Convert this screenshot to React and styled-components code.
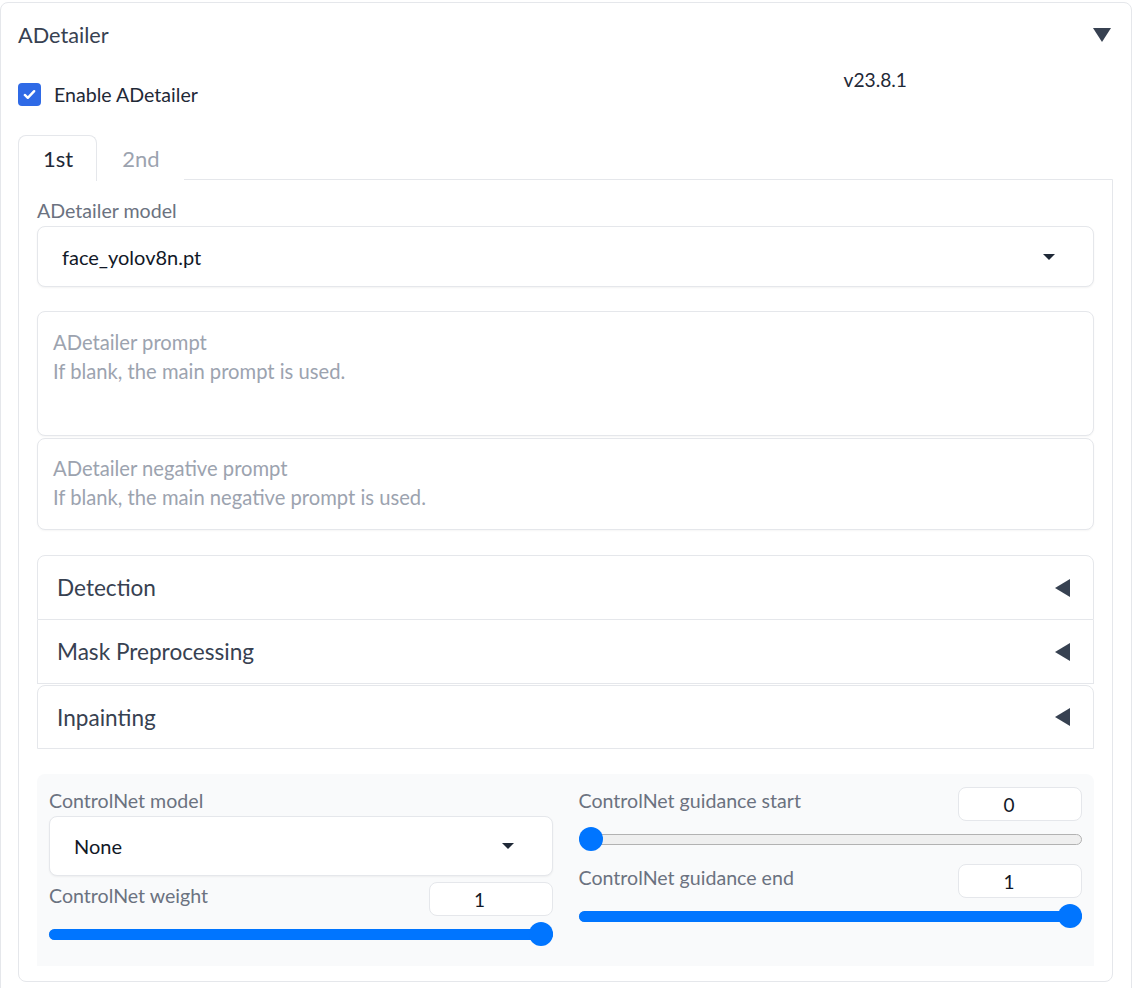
import React from 'react';
import styled, { createGlobalStyle } from 'styled-components';

const GlobalStyle = createGlobalStyle`
  html, body {
    margin: 0;
    padding: 0;
    background: #ffffff;
    font-family: Lato, "Noto Sans", "Liberation Sans", sans-serif;
    color: #1f2937;
  }
  * { box-sizing: border-box; }
`;

const Panel = styled.div`
  width: 1132px;
  margin-top: 2px;
  border: 1px solid #e5e7eb;
  border-radius: 8px;
  padding: 0 18px 40px 17px;
  background: #fff;
`;

const Header = styled.div`
  height: 64px;
  display: flex;
  align-items: center;
  justify-content: space-between;
`;

const Title = styled.span`
  font-size: 21.7px;
  color: #374151;
`;

const Triangle = styled.span`
  width: 0;
  height: 0;
  border-style: solid;
  border-color: transparent;
  ${p => p.$dir === 'down' && `
    border-width: 14px 9.5px 0 9.5px;
    border-top-color: #374151;
    margin-right: 2px;
  `}
  ${p => p.$dir === 'left' && `
    border-width: 9.5px 15px 9.5px 0;
    border-right-color: #374151;
  `}
  ${p => p.$dir === 'caret' && `
    border-width: 6px 6px 0 6px;
    border-top-color: #1f2937;
  `}
`;

const EnableRow = styled.div`
  height: 68px;
  display: grid;
  grid-template-columns: 1fr 1fr;
`;

const CheckLabel = styled.label`
  display: flex;
  align-items: center;
  gap: 13px;
  padding-top: 16px;
  align-self: start;
  font-size: 19.6px;
  color: #1f2937;
`;

const Check = styled.span`
  width: 23px;
  height: 23px;
  border-radius: 4px;
  background: #2f6ae6;
  display: flex;
  align-items: center;
  justify-content: center;
`;

const Version = styled.div`
  padding-top: 1px;
  padding-left: 278px;
  font-size: 19.2px;
  color: #1f2937;
`;

const TabBar = styled.div`
  display: flex;
  height: 45px;
`;

const Tab = styled.div`
  padding: 0 23px 0 24px;
  display: flex;
  align-items: center;
  font-size: 22px;
  color: ${p => (p.$active ? '#1f2937' : '#9ca3af')};
  background: #fff;
  border: 1px solid ${p => (p.$active ? '#e5e7eb' : 'transparent')};
  border-bottom: none;
  border-radius: 8px 8px 0 0;
  position: relative;
  z-index: 1;
  height: ${p => (p.$active ? '46px' : '45px')};
`;

const TabPanel = styled.div`
  margin-top: -1px;
  border: 1px solid #e5e7eb;
  border-radius: 0 0 8px 8px;
  padding: 20px 18px 15px 18px;
  display: flex;
  flex-direction: column;
`;

const FieldLabel = styled.div`
  font-size: 19.6px;
  line-height: 22px;
  color: #6b7280;
  margin-bottom: 4px;
  margin-top: ${p => p.$mt || 0}px;
`;

const Select = styled.div`
  height: ${p => p.$h || 61}px;
  border: 1px solid #e5e7eb;
  border-radius: 8px;
  background: #fff;
  box-shadow: 0 1px 2px rgba(0, 0, 0, 0.05);
  display: flex;
  align-items: center;
  justify-content: space-between;
  padding: 0 38px 0 24px;
  font-size: 20px;
  color: #111827;
`;

const TextArea = styled.div`
  height: ${p => p.$h}px;
  margin-top: ${p => p.$mt}px;
  border: 1px solid #e5e7eb;
  border-radius: 8px;
  background: #fff;
  box-shadow: 0 1px 2px rgba(0, 0, 0, 0.04);
  padding: ${p => p.$pt}px 15px 0 15px;
  font-size: 20.2px;
  line-height: 29px;
  color: #9ca3af;
`;

const AccordionGroup = styled.div`
  margin-top: 25px;
  display: flex;
  flex-direction: column;
`;

const Accordion = styled.div`
  height: ${p => p.$h}px;
  margin-top: ${p => p.$mt || 0}px;
  border: 1px solid #e5e7eb;
  border-top: ${p => (p.$noTop ? 'none' : '1px solid #e5e7eb')};
  border-radius: ${p => (p.$round ? '8px 8px 0 0' : '0')};
  background: #fff;
  display: flex;
  align-items: center;
  justify-content: space-between;
  padding: 0 23px 0 19px;
  font-size: 22.6px;
  color: #374151;
`;

const GreyBox = styled.div`
  margin-top: 25px;
  background: #f9fafb;
  border-radius: 8px 8px 0 0;
  padding: 13px 12px 14px 12px;
  display: grid;
  grid-template-columns: 1fr 1fr;
  column-gap: 26px;
`;

const Column = styled.div`
  display: flex;
  flex-direction: column;
`;

const SliderBlock = styled.div`
  display: flex;
  flex-direction: column;
  margin-top: ${p => p.$mt || 0}px;
`;

const SliderHead = styled.div`
  height: 34px;
  display: flex;
  justify-content: space-between;
  align-items: flex-start;
`;

const SliderLabel = styled.div`
  font-size: 19.6px;
  line-height: 22px;
  padding-top: 3px;
  color: #6b7280;
`;

const NumberBox = styled.div`
  width: 124px;
  height: 34px;
  border: 1px solid #e5e7eb;
  border-radius: 8px;
  background: #fff;
  display: flex;
  align-items: center;
  justify-content: center;
  padding-right: 22px;
  font-size: 19px;
  color: #111827;
`;

const SliderZone = styled.div`
  height: 36px;
  display: flex;
  align-items: center;
`;

const Track = styled.div`
  position: relative;
  width: 100%;
  height: 11px;
  border-radius: 6px;
  background: #efefef;
  border: 1px solid #b2b2b2;
`;

const Fill = styled.div`
  position: absolute;
  left: -1px;
  top: -1px;
  bottom: -1px;
  border-radius: 6px;
  background: #0075ff;
`;

const Thumb = styled.div`
  position: absolute;
  top: 50%;
  width: 24px;
  height: 24px;
  margin-top: -12px;
  margin-left: -12px;
  border-radius: 50%;
  background: #0075ff;
`;

function Slider({ label, value, min = 0, max = 1 }) {
  const pct = ((value - min) / (max - min)) * 100;
  return (
    <>
      <SliderHead>
        <SliderLabel>{label}</SliderLabel>
        <NumberBox>{value}</NumberBox>
      </SliderHead>
      <SliderZone>
        <Track>
          {pct > 0 && <Fill style={{ width: `calc(${pct}% + 2px)` }} />}
          <Thumb style={{ left: `calc(${pct}% + ${11 - pct * 0.22}px)` }} />
        </Track>
      </SliderZone>
    </>
  );
}

export default function App() {
  return (
    <>
      <GlobalStyle />
      <Panel>
        <Header>
          <Title>ADetailer</Title>
          <Triangle $dir="down" />
        </Header>
        <EnableRow>
          <CheckLabel>
            <Check>
              <svg width="15" height="15" viewBox="0 0 16 16">
                <path d="M3 8.5l3.2 3L13 4.5" fill="none" stroke="#fff" strokeWidth="2.6" strokeLinecap="round" strokeLinejoin="round" />
              </svg>
            </Check>
            Enable ADetailer
          </CheckLabel>
          <Version>v23.8.1</Version>
        </EnableRow>
        <TabBar>
          <Tab $active>1st</Tab>
          <Tab>2nd</Tab>
        </TabBar>
        <TabPanel>
          <FieldLabel>ADetailer model</FieldLabel>
          <Select>
            face_yolov8n.pt
            <Triangle $dir="caret" />
          </Select>
          <TextArea $h={125} $mt={24} $pt={16}>
            ADetailer prompt
            <br />
            If blank, the main prompt is used.
          </TextArea>
          <TextArea $h={92} $mt={2} $pt={15}>
            ADetailer negative prompt
            <br />
            If blank, the main negative prompt is used.
          </TextArea>
          <AccordionGroup>
            <Accordion $h={65} $round>
              Detection
              <Triangle $dir="left" />
            </Accordion>
            <Accordion $h={64} $noTop>
              Mask Preprocessing
              <Triangle $dir="left" />
            </Accordion>
            <Accordion $h={64} $mt={1} $round>
              Inpainting
              <Triangle $dir="left" />
            </Accordion>
          </AccordionGroup>
          <GreyBox>
            <Column>
              <FieldLabel $mt={3}>ControlNet model</FieldLabel>
              <Select $h={60}>
                None
                <Triangle $dir="caret" />
              </Select>
              <SliderBlock $mt={6}>
                <Slider label="ControlNet weight" value={1} />
              </SliderBlock>
            </Column>
            <Column>
              <SliderBlock>
                <Slider label="ControlNet guidance start" value={0} />
              </SliderBlock>
              <SliderBlock $mt={7}>
                <Slider label="ControlNet guidance end" value={1} />
              </SliderBlock>
            </Column>
          </GreyBox>
        </TabPanel>
      </Panel>
    </>
  );
}
